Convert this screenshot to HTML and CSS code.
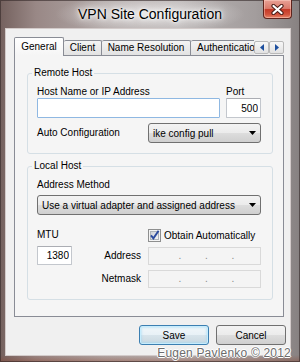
FILE: index.html
```html
<!DOCTYPE html>
<html lang="en">
<head>
<meta charset="utf-8">
<title>VPN Site Configuration</title>
<link rel="stylesheet" href="styles.css">
</head>
<body>
<div class="window">
  <div class="titlebar">
    <div class="title">VPN Site Configuration</div>
    <div class="close">
      <svg width="13" height="11" viewBox="0 0 13 11">
        <path d="M2.5 2 L10.5 9 M10.5 2 L2.5 9" stroke="#4a1d17" stroke-width="4.2" stroke-linecap="round" fill="none"/>
        <path d="M2.5 2 L10.5 9 M10.5 2 L2.5 9" stroke="#ffffff" stroke-width="2.2" stroke-linecap="round" fill="none"/>
      </svg>
    </div>
  </div>
  <div class="client">
    <div class="tabstrip">
      <div class="tabs">
        <div class="tab selected">General</div>
        <div class="tab tab-client">Client</div>
        <div class="tab tab-name">Name Resolution</div>
        <div class="tab tab-auth">Authentication</div>
      </div>
      <div class="scroll-btn">
        <svg width="4" height="7" viewBox="0 0 4 7"><path d="M4 0 L0 3.5 L4 7 Z" fill="#1d4f9e"/></svg>
      </div>
      <div class="scroll-btn">
        <svg width="4" height="7" viewBox="0 0 4 7"><path d="M0 0 L4 3.5 L0 7 Z" fill="#1d4f9e"/></svg>
      </div>
    </div>
    <div class="panel">
      <section class="group group-remote">
        <div class="group-title">Remote Host</div>
        <div class="grid-remote">
          <span class="lbl host-lbl">Host Name or IP Address</span>
          <span class="lbl port-lbl">Port</span>
          <input class="field focus host-input" type="text" value="">
          <input class="field num port-input" type="text" value="500">
          <span class="lbl auto-lbl">Auto Configuration</span>
          <div class="select auto-select">
            <span>ike config pull</span>
            <svg width="7" height="4" viewBox="0 0 7 4"><path d="M0 0 L7 0 L3.5 4 Z" fill="#000"/></svg>
          </div>
        </div>
      </section>
      <section class="group group-local">
        <div class="group-title">Local Host</div>
        <div class="grid-local">
          <span class="lbl method-lbl">Address Method</span>
          <div class="select method-select">
            <span>Use a virtual adapter and assigned address</span>
            <svg width="7" height="4" viewBox="0 0 7 4"><path d="M0 0 L7 0 L3.5 4 Z" fill="#000"/></svg>
          </div>
          <span class="lbl mtu-lbl">MTU</span>
          <div class="obtain">
            <svg class="check" width="13" height="13" viewBox="0 0 13 13">
              <defs>
                <linearGradient id="cbg" x1="0" y1="0" x2="1" y2="1">
                  <stop offset="0" stop-color="#cbcfd5"/>
                  <stop offset="1" stop-color="#f7f7f7"/>
                </linearGradient>
              </defs>
              <rect x="0.5" y="0.5" width="12" height="12" fill="#f4f4f4" stroke="#8e8f8f"/>
              <rect x="2.5" y="2.5" width="8" height="8" fill="url(#cbg)" stroke="#aeb3b9"/>
              <path d="M3 6.3 L5.4 9.4 L10.6 1.8" stroke="#2b4a9e" stroke-width="1.9" fill="none"/>
            </svg>
            <span>Obtain Automatically</span>
          </div>
          <div class="mtu-cell">
            <input class="field num mtu-input" type="text" value="1380">
            <span class="lbl side-lbl">Address</span>
          </div>
          <div class="ip-field ip-address">
            <span class="oct"></span><span class="dot">.</span><span class="oct"></span><span class="dot">.</span><span class="oct"></span><span class="dot">.</span><span class="oct"></span>
          </div>
          <span class="lbl side-lbl netmask-lbl">Netmask</span>
          <div class="ip-field ip-netmask">
            <span class="oct"></span><span class="dot">.</span><span class="oct"></span><span class="dot">.</span><span class="oct"></span><span class="dot">.</span><span class="oct"></span>
          </div>
        </div>
      </section>
    </div>
    <div class="buttons">
      <button class="btn btn-default" type="button">Save</button>
      <button class="btn" type="button">Cancel</button>
    </div>
  </div>
  <div class="watermark">Eugen Pavlenko © 2012</div>
</div>
</body>
</html>
```
FILE: styles.css
```css
* { box-sizing: border-box; }

html, body {
  margin: 0;
  padding: 0;
}

body {
  width: 300px;
  height: 362px;
  overflow: hidden;
  font-family: "Liberation Sans", Arial, sans-serif;
  font-size: 10px;
  color: #000;
  background: #8d8585;
}

.window {
  position: relative;
  width: 300px;
  height: 362px;
  display: flex;
  flex-direction: column;
  background:
    radial-gradient(ellipse 95px 20px at 150px 14px, rgba(235, 233, 233, 0.85), rgba(235, 233, 233, 0) 100%),
    linear-gradient(to top, rgba(140, 70, 50, 0.45) 0, rgba(140, 70, 50, 0) 7px),
    linear-gradient(to right, #74615e 0%, #998886 12%, #b1a8a7 35%, #b8b3b3 60%, #a39d9d 85%, #878181 100%);
  box-shadow: inset 0 0 0 1px rgba(50, 38, 38, 0.6);
}

.titlebar {
  height: 28px;
  flex: none;
  display: grid;
  grid-template-columns: 1fr auto 1fr;
  align-items: start;
}

.title {
  grid-column: 2;
  font-size: 14px;
  line-height: 16px;
  margin-top: 6px;
  white-space: nowrap;
  color: #000;
  text-shadow: 0 0 5px #fff, 0 0 9px #fff, 0 0 2px rgba(255, 255, 255, 0.9);
}

.close {
  grid-column: 3;
  justify-self: end;
  width: 29px;
  height: 19px;
  margin-right: 8px;
  border: 1px solid #5e241d;
  border-top: none;
  border-radius: 0 0 4px 4px;
  background: linear-gradient(#e8a195 0%, #da7a6b 47%, #c53a27 53%, #d2523c 80%, #e6866a 100%);
  box-shadow: inset 0 0 0 1px rgba(255, 215, 205, 0.45);
  display: flex;
  align-items: center;
  justify-content: center;
}

.client {
  flex: 1;
  margin: 0 9px 6px 5px;
  background: #f0f0f0;
  border: 1px solid #d3cbca;
  padding: 8px 4px 7px 8px;
  display: flex;
  flex-direction: column;
}

/* tabs */
.tabstrip {
  display: flex;
  flex: none;
  height: 19px;
  margin: 0 2px -1px 0;
  position: relative;
  z-index: 1;
}

.tabs {
  flex: 1;
  min-width: 0;
  display: flex;
  align-items: flex-end;
  overflow: hidden;
}

.tab {
  flex: none;
  height: 15px;
  margin-bottom: 1px;
  border: 1px solid #898c95;
  border-left: none;
  border-bottom: none;
  border-radius: 2px 2px 0 0;
  background: linear-gradient(#f4f4f4, #e2e2e2);
  line-height: 13px;
  text-align: center;
  white-space: nowrap;
}

.tab.selected {
  width: 50px;
  height: 19px;
  margin-bottom: 0;
  border-left: 1px solid #898c95;
  background: linear-gradient(#ffffff, #f5f5f5);
  line-height: 17px;
}

.tab-client { width: 38px; }
.tab-name { width: 89px; }
.tab-auth { padding: 0 6px; }

.scroll-btn {
  flex: none;
  width: 15px;
  height: 13px;
  align-self: flex-end;
  margin-bottom: 2px;
  border: 1px solid #b9b9b9;
  border-radius: 2px;
  background: linear-gradient(#f7f7f7, #e2e2e2);
  display: flex;
  align-items: center;
  justify-content: center;
}

/* panel */
.panel {
  flex: none;
  border: 1px solid #898c95;
  background: #f5f5f5;
  padding: 17px 10px 16px 12px;
  margin-right: 2px;
}

.group {
  border: 1px solid #d5dfe5;
  border-radius: 3px;
  padding: 0 11px 10px 9px;
}

.group-local {
  margin-top: 12px;
  padding-bottom: 11px;
}

.group-title {
  display: table;
  margin: -7px 0 7px -5px;
  padding: 0 2px;
  line-height: 12px;
  background: #f5f5f5;
  white-space: nowrap;
}

.lbl {
  line-height: 12px;
  white-space: nowrap;
}

.grid-remote {
  display: grid;
  grid-template-columns: 111px 72px 6px 35px;
}

.host-lbl { grid-column: 1 / 3; grid-row: 1; }
.port-lbl { grid-column: 4; grid-row: 1; }
.host-input { grid-column: 1 / 3; grid-row: 2; margin-top: 3px; height: 20px; }
.port-input { grid-column: 4; grid-row: 2; margin-top: 3px; height: 20px; }
.auto-lbl { grid-column: 1; grid-row: 3; margin-top: 5px; align-self: center; }
.auto-select { grid-column: 2 / 5; grid-row: 3; margin-top: 5px; height: 20px; }

.field {
  display: block;
  width: 100%;
  margin: 0;
  padding: 0 3px;
  font: inherit;
  color: #000;
  background: #fff;
  border: 1px solid #c3c7cd;
  border-top-color: #abadb3;
  border-radius: 1px;
  outline: none;
}

.field.focus { border-color: #8fb8e2; }
.field.num { text-align: right; padding-right: 2px; }

.select {
  display: flex;
  align-items: center;
  justify-content: space-between;
  padding: 0 4px;
  border: 1px solid #707070;
  border-radius: 3px;
  background: linear-gradient(#f3f3f3 0%, #ebebeb 50%, #dddddd 51%, #cfcfcf 100%);
  white-space: nowrap;
}

.grid-local {
  display: grid;
  grid-template-columns: 111px 113px;
}

.method-lbl { grid-column: 1 / 3; }
.method-select { grid-column: 1 / 3; margin-top: 4px; height: 20px; }

.mtu-lbl {
  grid-column: 1;
  margin-top: 13px;
  line-height: 14px;
}

.obtain {
  grid-column: 2;
  margin-top: 13px;
  height: 14px;
  display: flex;
  align-items: center;
  gap: 3px;
  white-space: nowrap;
}

.check { flex: none; }

.mtu-cell {
  grid-column: 1;
  margin-top: 4px;
  display: flex;
  align-items: center;
}

.mtu-input {
  flex: none;
  width: 35px;
  height: 19px;
}

.side-lbl {
  flex: 1;
  text-align: right;
  padding-right: 7px;
}

.netmask-lbl {
  grid-column: 1;
  margin-top: 5px;
  align-self: center;
}

.ip-field {
  grid-column: 2;
  height: 18px;
  margin-top: 5px;
  display: flex;
  align-items: center;
  padding: 0 2px 0 6px;
  border: 1px solid #d9d9d9;
  background: #f4f4f4;
  color: #8a8a8a;
  line-height: 12px;
}

.ip-field .oct { flex: 1; }
.ip-field .dot { width: 3px; text-align: center; }

/* buttons */
.buttons {
  display: flex;
  justify-content: flex-end;
  gap: 7px;
  margin-top: 8px;
}

.btn {
  width: 70px;
  height: 20px;
  padding: 0;
  font: inherit;
  color: #000;
  border: 1px solid #707070;
  border-radius: 3px;
  background: linear-gradient(#f3f3f3 0%, #ebebeb 50%, #dddddd 51%, #cfcfcf 100%);
}

.btn-default {
  border-color: #3c7fb1;
  background: linear-gradient(#f2f7fa 0%, #e8f1f6 50%, #d8e4eb 51%, #cad8e0 100%);
  box-shadow: inset 0 0 0 1px #c6ecfd, inset 0 0 2px 2px rgba(150, 215, 245, 0.45);
}

/* watermark overlay */
.watermark {
  position: absolute;
  right: 9px;
  bottom: 3px;
  font-size: 12px;
  line-height: 12px;
  color: #6c6c6c;
  white-space: nowrap;
  letter-spacing: 0.2px;
  text-shadow: 1px 0 0 #fff, -1px 0 0 #fff, 0 1px 0 #fff, 0 -1px 0 #fff;
}
```
